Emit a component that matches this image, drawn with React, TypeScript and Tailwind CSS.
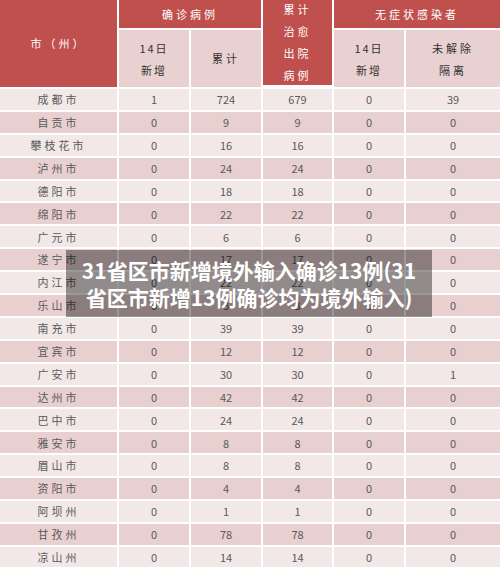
import React from 'react';

type Row = [string, string, string, string, string, string];

const rows: Row[] = [
  ['成都市', '1', '724', '679', '0', '39'],
  ['自贡市', '0', '9', '9', '0', '0'],
  ['攀枝花市', '0', '16', '16', '0', '0'],
  ['泸州市', '0', '24', '24', '0', '0'],
  ['德阳市', '0', '18', '18', '0', '0'],
  ['绵阳市', '0', '22', '22', '0', '0'],
  ['广元市', '0', '6', '6', '0', '0'],
  ['遂宁市', '0', '17', '17', '0', '0'],
  ['内江市', '0', '22', '22', '0', '0'],
  ['乐山市', '0', '3', '3', '0', '0'],
  ['南充市', '0', '39', '39', '0', '0'],
  ['宜宾市', '0', '12', '12', '0', '0'],
  ['广安市', '0', '30', '30', '0', '1'],
  ['达州市', '0', '42', '42', '0', '0'],
  ['巴中市', '0', '24', '24', '0', '0'],
  ['雅安市', '0', '8', '8', '0', '0'],
  ['眉山市', '0', '8', '8', '0', '0'],
  ['资阳市', '0', '4', '4', '0', '0'],
  ['阿坝州', '0', '1', '1', '0', '0'],
  ['甘孜州', '0', '78', '78', '0', '0'],
  ['凉山州', '0', '14', '14', '0', '0'],
];

export default function App() {
  return (
    <div className="relative w-[500px] h-[567px] overflow-hidden bg-white font-['Noto_Sans_CJK_SC',sans-serif]">
      <div className="grid grid-cols-[117px_70px_70px_69px_70px_1fr] grid-rows-[28px_57px] auto-rows-[20.9px] gap-[2px] bg-white text-[11px]">
        {/* header */}
        <div className="row-span-2 bg-[#c0504d] text-white flex items-center justify-center tracking-[3px]">
          市（州）
        </div>
        <div className="col-span-2 bg-[#c0504d] text-white flex items-center justify-center tracking-[3px]">
          确诊病例
        </div>
        <div className="row-span-2 bg-[#c0504d] text-white flex flex-col items-center justify-center gap-[6px] leading-[16px] tracking-[3px] -translate-y-[2px]">
          <span>累计</span>
          <span>治愈</span>
          <span>出院</span>
          <span>病例</span>
        </div>
        <div className="col-span-2 bg-[#c0504d] text-white flex items-center justify-center tracking-[3px]">
          无症状感染者
        </div>
        <div className="bg-[#e9d1d1] text-[#333] flex flex-col items-center justify-center gap-[6px] leading-[16px] tracking-[2px]">
          <span>14日</span>
          <span>新增</span>
        </div>
        <div className="bg-[#e9d1d1] text-[#333] flex items-center justify-center tracking-[3px]">
          累计
        </div>
        <div className="bg-[#e9d1d1] text-[#333] flex flex-col items-center justify-center gap-[6px] leading-[16px] tracking-[2px]">
          <span>14日</span>
          <span>新增</span>
        </div>
        <div className="bg-[#e9d1d1] text-[#333] flex flex-col items-center justify-center gap-[6px] leading-[16px] tracking-[3px]">
          <span>未解除</span>
          <span>隔离</span>
        </div>

        {/* body */}
        {rows.map((r, i) =>
          r.map((cell, j) => (
            <div
              key={`${i}-${j}`}
              className={`flex items-center justify-center text-[#5a5a5a] ${
                i % 2 === 0 ? 'bg-[#f2e8e8]' : 'bg-[#e8cfd0]'
              } ${j === 0 ? 'tracking-[3px]' : ''}`}
            >
              {cell}
            </div>
          ))
        )}
      </div>

      {/* caption overlay */}
      <div className="absolute left-[66px] top-[250px] w-[366px] h-[67px] bg-black/40 flex items-center justify-center">
        <p className="text-white font-bold text-[21px] leading-[27px] text-center whitespace-nowrap">
          31省区市新增境外输入确诊13例(31
          <br />
          省区市新增13例确诊均为境外输入)
        </p>
      </div>
    </div>
  );
}
